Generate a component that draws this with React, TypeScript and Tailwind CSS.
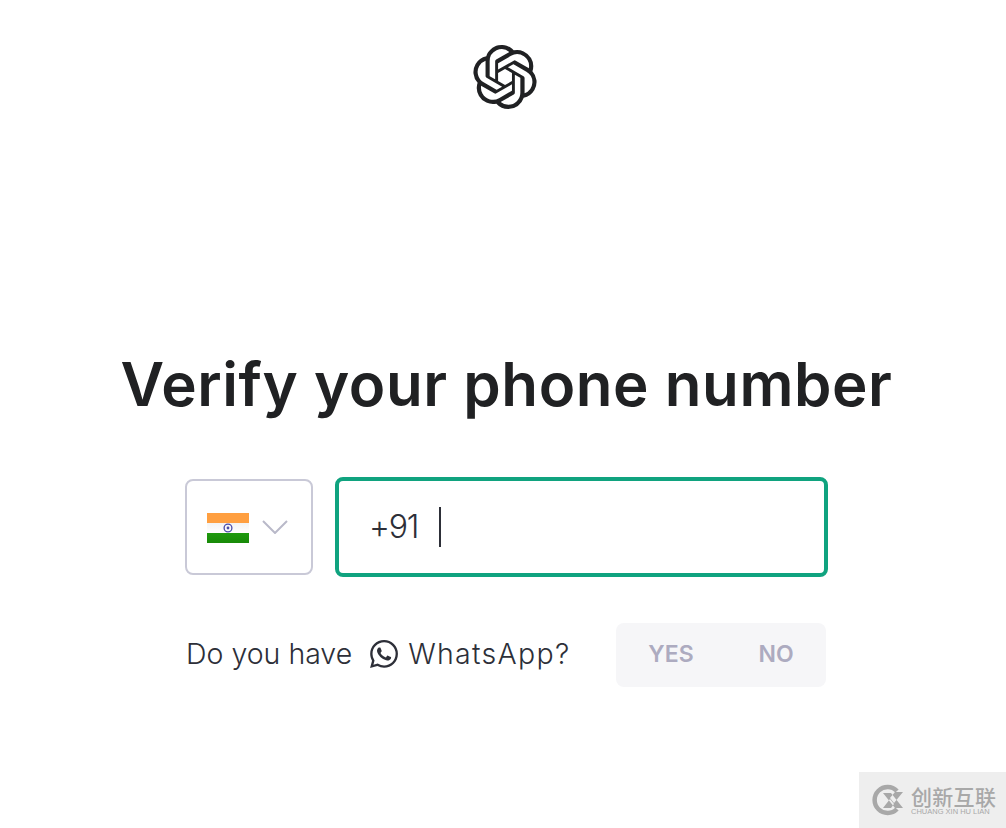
import { SiOpenai, SiWhatsapp } from 'react-icons/si';

function IndiaFlag() {
  return (
    <div className="mt-px flex h-[30px] w-[42px] flex-col">
      <div className="h-[10px] bg-[#ff9f40]" />
      <div className="flex h-[10px] items-center justify-center bg-gradient-to-b from-[#f3f3f3] to-white">
        <svg width="10" height="10" viewBox="0 0 10 10">
          <circle cx="5" cy="5" r="3.9" fill="none" stroke="#4a4aa8" strokeWidth="1.3" />
          <circle cx="5" cy="5" r="1.4" fill="#4a4aa8" />
        </svg>
      </div>
      <div className="h-[10px] bg-gradient-to-b from-[#1f9a0e] to-[#188a08]" />
    </div>
  );
}

export default function App() {
  return (
    <div className="relative h-[828px] w-full overflow-hidden bg-white font-['Inter',sans-serif]">
      <div className="flex flex-col items-center pt-[45px] pl-[7px]">
        {/* Logo */}
        <SiOpenai className="mr-[4px] h-16 w-16 text-[#202123]" />

        <h1 className="mt-[237px] text-[60px] leading-[76px] font-semibold tracking-[0.58px] whitespace-nowrap text-[#202123]">
          Verify your phone number
        </h1>

        {/* Phone input */}
        <div className="mt-[55px] flex w-[643px] items-center gap-[22px]">
          <div className="flex h-24 w-32 items-center gap-[13px] rounded-lg border-2 border-[#c9c9d7] pl-[20px]">
            <IndiaFlag />
            <svg width="26" height="14" viewBox="0 0 26 14" fill="none">
              <path d="M1 1 L13 13 L25 1" stroke="#b9b9c9" strokeWidth="2" />
            </svg>
          </div>
          <div className="flex h-[100px] flex-1 items-center rounded-lg border-4 border-[#10a37f] pl-[30px]">
            <span className="text-[32px] leading-10 font-light tracking-[-1.2px] text-[#2d2f38]">+91</span>
            <div className="ml-[21px] h-10 w-[2px] bg-[#2d2f38]" />
          </div>
        </div>

        {/* WhatsApp question */}
        <div className="mt-[46px] flex w-[641px] items-center justify-between">
          <div className="flex items-center pb-[2px] text-[28.5px] font-light text-[#2d2f38]">
            <span>Do you have</span>
            <SiWhatsapp className="mr-[10px] ml-[18px] h-7 w-7" />
            <span className="tracking-[1.3px]">WhatsApp?</span>
          </div>
          <div className="mr-px flex h-16 w-[210px] items-center rounded-lg bg-[#f6f6f8] pb-[2px] text-[23px] font-semibold text-[#adabc0]">
            <span className="w-[110px] text-center">YES</span>
            <span className="w-[100px] text-center">NO</span>
          </div>
        </div>
      </div>

      {/* Watermark */}
      <div className="absolute right-0 bottom-0 flex h-14 w-[147px] items-center gap-[6px] bg-[#eeeeee] pl-[12px]">
        <svg width="34" height="34" viewBox="0 0 34 34" fill="none">
          <path d="M26 8 A13 13 0 1 0 26 26" stroke="#a8a8a8" strokeWidth="4.5" />
          <path d="M12 10 L20 10 L32 25 L24 25 Z M32 9 L24 9 L19 15 L23 20 Z M12 25 L20 25 L23 21 L19 16 Z" fill="#a8a8a8" />
        </svg>
        <div className="flex flex-col">
          <span className="font-['Noto_Sans_CJK_SC',sans-serif] text-[21px] leading-[22px] font-medium tracking-[0.3px] text-[#a8a8a8]">创新互联</span>
          <span className="font-['Liberation_Sans',sans-serif] text-[7.5px] leading-[9px] whitespace-nowrap text-[#a8a8a8]">CHUANG XIN HU LIAN</span>
        </div>
      </div>
    </div>
  );
}
